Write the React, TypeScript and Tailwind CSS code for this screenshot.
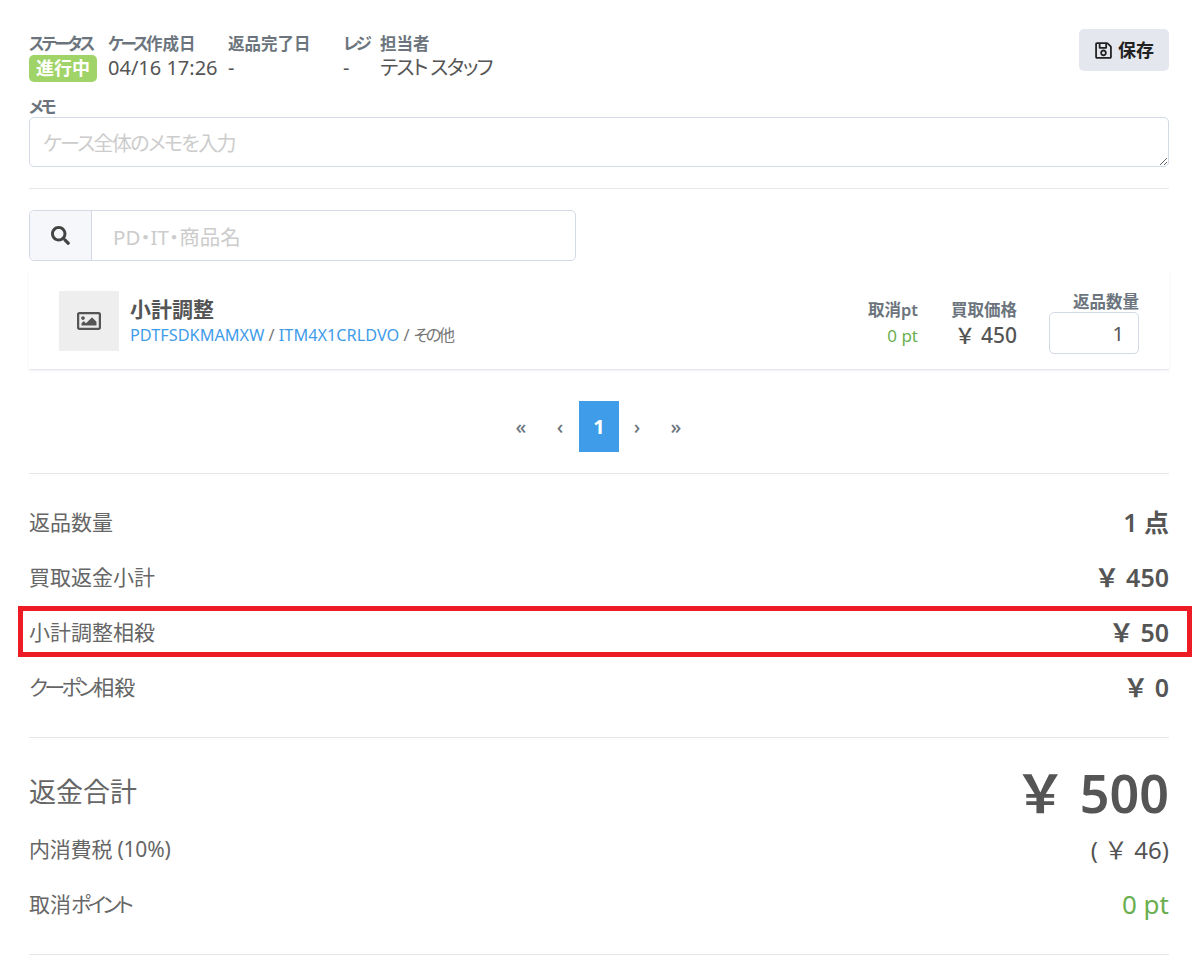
import React from 'react';
import { FaRegImage, FaRegSave, FaSearch } from 'react-icons/fa';

const YEN = '\uFFE5';

function Kana({ children }: { children: React.ReactNode }) {
  return <span className="tracking-[-0.17em]">{children}</span>;
}

function Meta({ label, children, className, valueClass }: { label: React.ReactNode; children: React.ReactNode; className?: string; valueClass?: string }) {
  return (
    <div className={className}>
      <div className="text-[16.5px] leading-[20px] font-semibold text-[#6c757d] whitespace-nowrap">{label}</div>
      <div className={`text-[20px] leading-[27px] text-[#555] whitespace-nowrap ${valueClass ?? ''}`}>{children}</div>
    </div>
  );
}

function SummaryRow({ label, value, highlight }: { label: React.ReactNode; value: string; highlight?: boolean }) {
  return (
    <div className="relative flex h-[55px] items-center justify-between">
      <span className="text-[21px] text-[#666]">{label}</span>
      <span className="text-[25px] font-semibold text-[#555] [font-feature-settings:normal]">{value}</span>
      {highlight && <div className="absolute -left-[11px] -right-[23px] top-[1px] h-[51px] border-[5px] border-[#ed1c24]" />}
    </div>
  );
}

export default function App() {
  return (
    <div className="min-h-[966px] bg-white pl-[29px] pr-[26px] pt-[29px] text-[#555] font-['Noto_Sans','Noto_Sans_CJK_JP',sans-serif] [font-feature-settings:'palt']">
      <div className="flex justify-between">
        <div className="flex pt-[5px]">
          <div className="w-[79px]">
            <div className="text-[16.5px] leading-[20px] font-semibold text-[#6c757d] whitespace-nowrap"><Kana>ステータス</Kana></div>
            <span className="mt-[1px] inline-block h-[27px] rounded-[5px] bg-[#a0d468] px-[7px] text-[18px] font-bold leading-[27px] text-white">進行中</span>
          </div>
          <Meta label={<><Kana>ケース</Kana>作成日</>} className="w-[120px]">04/16 17:26</Meta>
          <Meta label="返品完了日" className="w-[115px]">-</Meta>
          <Meta label={<Kana>レジ</Kana>} className="w-[37px]">-</Meta>
          <Meta label="担当者" valueClass="tracking-[-1.6px]">テスト スタッフ</Meta>
        </div>
        <button className="flex h-[42px] w-[90px] items-center justify-center gap-[5px] rounded-[5px] bg-[#e4e7ee] text-[18px] font-semibold text-[#222]">
          <FaRegSave className="h-[19px] w-[19px]" />
          保存
        </button>
      </div>

      <div className="mt-[15px] text-[16.5px] leading-[20px] font-semibold text-[#6c757d]"><Kana>メモ</Kana></div>
      <textarea
        placeholder="ケース全体のメモを入力"
        className="block h-[50px] w-full rounded-[5px] border border-[#d3d9e5] px-[13px] pt-[12px] text-[20px] leading-[28px] tracking-[-1.6px] placeholder:text-[#ccc]"
      />
      <div className="mt-[21px] border-t border-[#e5e7eb]" />

      <div className="mt-[21px] flex h-[51px] w-[547px] rounded-[5px] border border-[#d3d9e5]">
        <div className="flex w-[62px] items-center justify-center rounded-l-[5px] border-r border-[#d3d9e5] bg-[#f5f7fa]">
          <FaSearch className="h-[19px] w-[19px] text-[#444]" />
        </div>
        <input placeholder="PD・IT・商品名" className="min-w-0 flex-1 px-[21px] pt-[3px] text-[20.5px] placeholder:text-[#ccc]" />
      </div>

      <div className="mt-[10px] flex h-[99px] justify-between border-b border-[#e5e7ef] pl-[30px] pr-[30px] shadow-[0_1px_3px_rgba(0,0,0,0.06)]">
        <div className="flex items-center pt-[2px]">
          <div className="flex h-[60px] w-[60px] items-center justify-center bg-[#eee]">
            <FaRegImage className="h-[24px] w-[24px] text-[#555]" />
          </div>
          <div className="ml-[11px]">
            <div className="text-[21px] font-semibold leading-[28px] text-[#555]">小計調整</div>
            <div className="text-[16.3px] leading-[24px] text-[#777]">
              <span className="text-[#3f9ce8]">PDTFSDKMAMXW</span> / <span className="text-[#3f9ce8]">ITM4X1CRLDVO</span> / <Kana>その</Kana>他
            </div>
          </div>
        </div>
        <div className="mt-[21px] flex items-start">
          <div className="w-[70px] pt-[7px] text-right">
            <div className="text-[16.5px] font-semibold leading-[22px] text-[#6c757d]">取消pt</div>
            <div className="text-[17px] leading-[30px] text-[#6aaf4f]">0 pt</div>
          </div>
          <div className="ml-[32px] w-[67px] pt-[7px] text-right">
            <div className="text-[16.5px] font-semibold leading-[22px] text-[#6c757d]">買取価格</div>
            <div className="-ml-[10px] whitespace-nowrap text-[21px] font-medium leading-[28px] text-[#555] [font-feature-settings:normal]">{YEN} 450</div>
          </div>
          <div className="ml-[32px] w-[90px] text-right">
            <div className="text-[16.5px] font-semibold leading-[20px] text-[#6c757d]">返品数量</div>
            <input defaultValue="1" className="h-[42px] w-[90px] rounded-[5px] border border-[#d3d9e5] px-[14px] text-right text-[20px] text-[#555]" />
          </div>
        </div>
      </div>

      <div className="mt-[31px] flex items-center justify-center font-medium text-[#6c757d]">
        <span className="flex h-[51px] w-[40px] items-center justify-center text-[20px]">«</span>
        <span className="flex h-[51px] w-[38px] items-center justify-center text-[20px]">‹</span>
        <span className="flex h-[51px] w-[40px] items-center justify-center bg-[#3f9ce8] text-[20px] font-bold text-white">1</span>
        <span className="flex h-[51px] w-[36px] items-center justify-center text-[20px]">›</span>
        <span className="flex h-[51px] w-[42px] items-center justify-center text-[20px]">»</span>
      </div>
      <div className="mt-[21px] border-t border-[#e5e7eb]" />

      <div className="mt-[21px]">
        <SummaryRow label="返品数量" value="1 点" />
        <SummaryRow label="買取返金小計" value={`${YEN} 450`} />
        <SummaryRow label="小計調整相殺" value={`${YEN} 50`} highlight />
        <SummaryRow label={<><Kana>クーポン</Kana>相殺</>} value={`${YEN} 0`} />
      </div>
      <div className="mt-[22px] border-t border-[#e5e7eb]" />

      <div className="mt-[25px] flex h-[59px] items-center justify-between">
        <span className="text-[27px] text-[#666]">返金合計</span>
        <span className="text-[52px] font-semibold leading-none text-[#555] [font-feature-settings:normal]">{YEN} 500</span>
      </div>
      <div className="flex h-[55px] items-center justify-between">
        <span className="text-[21px] text-[#666] tracking-[-0.2px]">内消費税 (10%)</span>
        <span className="text-[24px] text-[#555] [font-feature-settings:normal]">( {YEN} 46)</span>
      </div>
      <div className="flex h-[55px] items-center justify-between">
        <span className="text-[21px] text-[#666]">取消<Kana>ポイント</Kana></span>
        <span className="text-[26px] text-[#6aaf4f]">0 pt</span>
      </div>
      <div className="mt-[22px] border-t border-[#e5e7eb]" />
    </div>
  );
}
